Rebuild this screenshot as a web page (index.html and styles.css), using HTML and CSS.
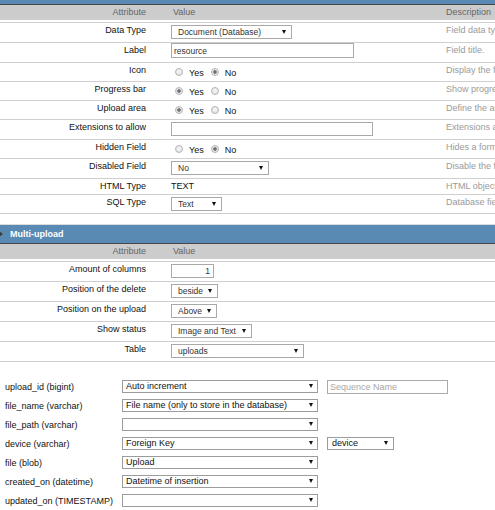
FILE: index.html
```html
<!DOCTYPE html>
<html lang="en">
<head>
<meta charset="utf-8">
<title>Field properties</title>
<link rel="stylesheet" href="styles.css">
</head>
<body>
<div class="page">
  <section class="panel">
    <div class="panel-bar panel-bar--cut"></div>
    <div class="grid-head">
      <span class="c-attr">Attribute</span><span class="c-val">Value</span><span class="c-desc">Description</span>
    </div>
    <div class="rows">
      <div class="row">
        <div class="c-attr">Data Type</div>
        <div class="c-val"><span class="sel w-121"><select><option>Document (Database)</option></select></span></div>
        <div class="c-desc">Field data type.</div>
      </div>
      <div class="row">
        <div class="c-attr">Label</div>
        <div class="c-val c-val--flush"><input class="txt w-183" type="text" value="resource"></div>
        <div class="c-desc">Field title.</div>
      </div>
      <div class="row row--radio">
        <div class="c-attr">Icon</div>
        <div class="c-val c-val--radio"><input class="radio" type="radio" name="icon"><span class="rlabel">Yes</span><input class="radio" type="radio" name="icon" checked><span class="rlabel">No</span></div>
        <div class="c-desc">Display the field icon.</div>
      </div>
      <div class="row row--radio">
        <div class="c-attr">Progress bar</div>
        <div class="c-val c-val--radio"><input class="radio" type="radio" name="prog" checked><span class="rlabel">Yes</span><input class="radio" type="radio" name="prog"><span class="rlabel">No</span></div>
        <div class="c-desc">Show progress bar.</div>
      </div>
      <div class="row row--radio">
        <div class="c-attr">Upload area</div>
        <div class="c-val c-val--radio"><input class="radio" type="radio" name="area" checked><span class="rlabel">Yes</span><input class="radio" type="radio" name="area"><span class="rlabel">No</span></div>
        <div class="c-desc">Define the area of upload.</div>
      </div>
      <div class="row">
        <div class="c-attr">Extensions to allow</div>
        <div class="c-val"><input class="txt txt--short w-202" type="text" value=""></div>
        <div class="c-desc">Extensions allowed for upload.</div>
      </div>
      <div class="row row--radio">
        <div class="c-attr">Hidden Field</div>
        <div class="c-val c-val--radio"><input class="radio" type="radio" name="hid"><span class="rlabel">Yes</span><input class="radio" type="radio" name="hid" checked><span class="rlabel">No</span></div>
        <div class="c-desc">Hides a form field.</div>
      </div>
      <div class="row">
        <div class="c-attr">Disabled Field</div>
        <div class="c-val"><span class="sel w-98"><select><option>No</option></select></span></div>
        <div class="c-desc">Disable the field.</div>
      </div>
      <div class="row row--text">
        <div class="c-attr">HTML Type</div>
        <div class="c-val c-val--text">TEXT</div>
        <div class="c-desc">HTML object type.</div>
      </div>
      <div class="row row--radio">
        <div class="c-attr">SQL Type</div>
        <div class="c-val"><span class="sel w-51"><select><option>Text</option></select></span></div>
        <div class="c-desc">Database field type.</div>
      </div>
    </div>
  </section>

  <section class="panel panel--spaced">
    <div class="panel-bar panel-bar--titled"><span class="caret"></span>Multi-upload</div>
    <div class="grid-head">
      <span class="c-attr">Attribute</span><span class="c-val">Value</span><span class="c-desc"></span>
    </div>
    <div class="rows">
      <div class="row">
        <div class="c-attr">Amount of columns</div>
        <div class="c-val"><input class="txt txt--num w-43" type="text" value="1"></div>
        <div class="c-desc"></div>
      </div>
      <div class="row">
        <div class="c-attr">Position of the delete</div>
        <div class="c-val"><span class="sel w-47"><select><option>beside</option></select></span></div>
        <div class="c-desc"></div>
      </div>
      <div class="row">
        <div class="c-attr">Position on the upload</div>
        <div class="c-val"><span class="sel w-46"><select><option>Above</option></select></span></div>
        <div class="c-desc"></div>
      </div>
      <div class="row">
        <div class="c-attr">Show status</div>
        <div class="c-val"><span class="sel w-81"><select><option>Image and Text</option></select></span></div>
        <div class="c-desc"></div>
      </div>
      <div class="row">
        <div class="c-attr">Table</div>
        <div class="c-val"><span class="sel w-133"><select><option>uploads</option></select></span></div>
        <div class="c-desc"></div>
      </div>
    </div>
  </section>

  <section class="fields">
    <div class="field">
      <span class="f-name">upload_id (bigint)</span>
      <span class="f-ctrls"><span class="sel sel--sm w-196"><select><option>Auto increment</option></select></span><input class="seq" type="text" placeholder="Sequence Name"></span>
    </div>
    <div class="field">
      <span class="f-name">file_name (varchar)</span>
      <span class="f-ctrls"><span class="sel sel--sm w-196"><select><option>File name (only to store in the database)</option></select></span></span>
    </div>
    <div class="field">
      <span class="f-name">file_path (varchar)</span>
      <span class="f-ctrls"><span class="sel sel--sm w-196"><select><option></option></select></span></span>
    </div>
    <div class="field">
      <span class="f-name">device (varchar)</span>
      <span class="f-ctrls"><span class="sel sel--sm w-196"><select><option>Foreign Key</option></select></span><span class="sel sel--sm sel--fk w-67"><select><option>device</option></select></span></span>
    </div>
    <div class="field">
      <span class="f-name">file (blob)</span>
      <span class="f-ctrls"><span class="sel sel--sm w-196"><select><option>Upload</option></select></span></span>
    </div>
    <div class="field">
      <span class="f-name">created_on (datetime)</span>
      <span class="f-ctrls"><span class="sel sel--sm w-196"><select><option>Datetime of insertion</option></select></span></span>
    </div>
    <div class="field">
      <span class="f-name">updated_on (TIMESTAMP)</span>
      <span class="f-ctrls"><span class="sel sel--sm w-196"><select><option></option></select></span></span>
    </div>
  </section>
</div>
</body>
</html>
```

FILE: styles.css
```css
* { box-sizing: border-box; }

html, body {
  margin: 0;
  padding: 0;
  background: #fff;
  overflow: hidden;
}

body {
  font-family: "Liberation Sans", Arial, sans-serif;
  font-size: 9px;
  color: #111;
  width: 495px;
  height: 510px;
}

.page {
  width: 720px;
}

/* ---------- blue section bar ---------- */
.panel-bar {
  background: #588ab4;
  border-bottom: 1px solid #474747;
  color: #fff;
  font-weight: bold;
  font-size: 9px;
  white-space: nowrap;
}

.panel-bar--cut {
  height: 5px;
}

.panel-bar--titled {
  height: 20px;
  line-height: 18px;
  border-top: 1px solid #dcdcdc;
  display: flex;
  align-items: center;
}

.panel--spaced {
  margin-top: 10px;
}

.caret {
  display: inline-block;
  width: 0;
  height: 0;
  border-top: 3px solid transparent;
  border-bottom: 3px solid transparent;
  border-left: 4px solid #3a3a3a;
  margin-left: -1px;
  margin-right: 7px;
}

/* ---------- header row ---------- */
.grid-head {
  display: grid;
  grid-template-columns: 146px 300px 1fr;
  height: 15px;
  line-height: 15px;
  background: #cccccc;
  color: #666;
  margin-bottom: 2px;
  white-space: nowrap;
}

.c-attr {
  text-align: right;
  white-space: nowrap;
}

.grid-head .c-val {
  padding-left: 27px;
}

/* ---------- data rows ---------- */
.rows {
  border-bottom: 1px solid #cfcfcf;
}

.row {
  display: grid;
  grid-template-columns: 146px 300px 1fr;
  align-items: start;
  height: 20px;
  border-top: 1px solid #cfcfcf;
}

.row--radio { height: 19px; }
.row--text { height: 16px; }

.row > .c-attr,
.row > .c-desc {
  padding-top: 1px;
  line-height: 12px;
}

.row > .c-desc {
  color: #9a9a9a;
  white-space: nowrap;
}

.row > .c-val {
  padding-left: 25px;
  padding-top: 2px;
  display: flex;
  align-items: flex-start;
}

.row > .c-val--flush {
  padding-top: 0;
}

.row > .c-val--text {
  padding-top: 1px;
  line-height: 12px;
}

.row > .c-val--radio {
  padding-top: 4px;
  padding-left: 29px;
  line-height: 12px;
  align-items: flex-start;
}

/* ---------- radios ---------- */
.radio {
  -webkit-appearance: none;
  appearance: none;
  width: 8px;
  height: 8px;
  margin: 1px 0 0 0;
  border: 1px solid #b4b4b4;
  border-radius: 50%;
  background: radial-gradient(circle at 50% 40%, #f7f7f7, #dedede);
  flex: none;
}

.radio:checked {
  background: radial-gradient(circle, #6e6e6e 0 1.4px, #dcdcdc 2px, #ececec 3px);
}

.rlabel {
  margin-left: 6px;
  margin-right: 7px;
  color: #111;
}

/* ---------- text inputs ---------- */
.txt {
  height: 15px;
  border: 1px solid #a9a9a9;
  border-radius: 0;
  padding: 0 2px;
  margin: 0;
  font: 8.5px "Liberation Sans", Arial, sans-serif;
  color: #333;
  background: #fff;
}

.txt--short { height: 14px; }

.txt--num {
  height: 14px;
  text-align: right;
  padding-right: 3px;
}

/* ---------- selects ---------- */
.sel {
  position: relative;
  display: inline-block;
  flex: none;
}

.sel select {
  -webkit-appearance: none;
  appearance: none;
  display: block;
  width: 100%;
  height: 14px;
  margin: 0;
  padding: 0 12px 0 6px;
  border: 1px solid #a9a9a9;
  border-radius: 0;
  background: #fff;
  font: 8.5px "Liberation Sans", Arial, sans-serif;
  color: #333;
  line-height: 12px;
}

.sel::after {
  content: "";
  position: absolute;
  right: 6px;
  top: 5px;
  width: 0;
  height: 0;
  border-left: 2px solid transparent;
  border-right: 2px solid transparent;
  border-top: 4px solid #111;
  pointer-events: none;
}

.sel--sm select {
  height: 13px;
  padding-left: 3px;
  font-size: 9px;
  color: #111;
  border-color: #9c9c9c;
  line-height: 11px;
}

.sel--sm::after {
  right: 5px;
  top: 4px;
}

.sel--fk select { padding-left: 4px; }
.sel--fk::after { right: 6px; }

.w-43 { width: 43px; }
.w-46 { width: 46px; }
.w-47 { width: 47px; }
.w-51 { width: 51px; }
.w-67 { width: 67px; }
.w-81 { width: 81px; }
.w-98 { width: 98px; }
.w-121 { width: 121px; }
.w-133 { width: 133px; }
.w-183 { width: 183px; }
.w-196 { width: 196px; }
.w-202 { width: 202px; }

/* ---------- field mapping list ---------- */
.fields {
  margin-top: 15px;
}

.field {
  display: grid;
  grid-template-columns: 122px 1fr;
  align-items: center;
  height: 19px;
}

.f-name {
  padding-left: 5px;
  white-space: nowrap;
  color: #111;
}

.f-ctrls {
  display: flex;
  align-items: center;
  gap: 9px;
}

.seq {
  width: 121px;
  height: 14px;
  margin: 0;
  padding: 0 2px;
  border: 1px solid #aaa;
  border-radius: 0;
  font: 9px "Liberation Sans", Arial, sans-serif;
  color: #333;
  background: #fff;
}

.seq::placeholder {
  color: #a8a8a8;
}
```
